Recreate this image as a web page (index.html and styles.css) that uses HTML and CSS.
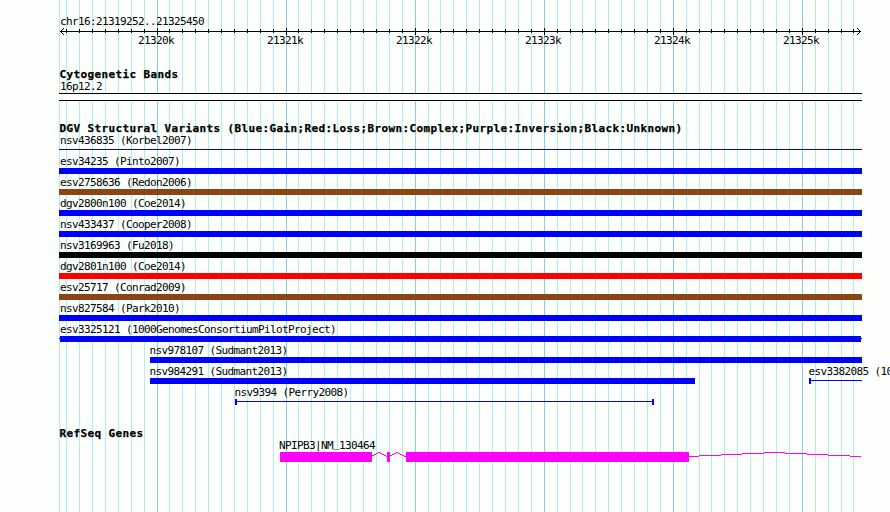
FILE: index.html
```html
<!DOCTYPE html>
<html lang="en">
<head>
<meta charset="utf-8">
<title>chr16:21319252..21325450</title>
<link rel="stylesheet" href="styles.css">
</head>
<body>
<main class="browser">
<svg class="grid" width="890" height="512" aria-hidden="true">
<path class="minor" d="M59.5 0v512M66.5 0v512M79.5 0v512M92.5 0v512M105.5 0v512M118.5 0v512M131.5 0v512M144.5 0v512M169.5 0v512M182.5 0v512M195.5 0v512M208.5 0v512M221.5 0v512M234.5 0v512M247.5 0v512M260.5 0v512M273.5 0v512M298.5 0v512M311.5 0v512M324.5 0v512M337.5 0v512M350.5 0v512M363.5 0v512M376.5 0v512M389.5 0v512M402.5 0v512M428.5 0v512M440.5 0v512M453.5 0v512M466.5 0v512M479.5 0v512M492.5 0v512M505.5 0v512M518.5 0v512M531.5 0v512M557.5 0v512M570.5 0v512M582.5 0v512M595.5 0v512M608.5 0v512M621.5 0v512M634.5 0v512M647.5 0v512M660.5 0v512M686.5 0v512M699.5 0v512M711.5 0v512M724.5 0v512M737.5 0v512M750.5 0v512M763.5 0v512M776.5 0v512M789.5 0v512M815.5 0v512M828.5 0v512M841.5 0v512M853.5 0v512"/>
<path class="major" d="M157.5 0v512M286.5 0v512M415.5 0v512M544.5 0v512M673.5 0v512M802.5 0v512"/>
</svg>
<header class="ruler">
<div class="label">chr16:21319252..21325450</div>
<svg class="axis" width="803" height="7" viewBox="59 28 803 7">
<path d="M60 31.5H861M79.5 29v4M92.5 29v4M105.5 29v4M118.5 29v4M131.5 29v4M144.5 29v4M157.5 28v7M169.5 29v4M182.5 29v4M195.5 29v4M208.5 29v4M221.5 29v4M234.5 29v4M247.5 29v4M260.5 29v4M273.5 29v4M286.5 28v7M298.5 29v4M311.5 29v4M324.5 29v4M337.5 29v4M350.5 29v4M363.5 29v4M376.5 29v4M389.5 29v4M402.5 29v4M415.5 28v7M428.5 29v4M440.5 29v4M453.5 29v4M466.5 29v4M479.5 29v4M492.5 29v4M505.5 29v4M518.5 29v4M531.5 29v4M544.5 28v7M557.5 29v4M570.5 29v4M582.5 29v4M595.5 29v4M608.5 29v4M621.5 29v4M634.5 29v4M647.5 29v4M660.5 29v4M673.5 28v7M686.5 29v4M699.5 29v4M711.5 29v4M724.5 29v4M737.5 29v4M750.5 29v4M763.5 29v4M776.5 29v4M789.5 29v4M802.5 28v7M815.5 29v4M828.5 29v4M841.5 29v4M853.5 29v4M66.5 29v4M63.5 28v1M62.5 29v1M61.5 30v1M61.5 32v1M62.5 33v1M63.5 34v1M857.5 28v1M858.5 29v1M859.5 30v1M859.5 32v1M858.5 33v1M857.5 34v1"/>
</svg>
<div class="ticks"><span>21320k</span><span>21321k</span><span>21322k</span><span>21323k</span><span>21324k</span><span>21325k</span></div>
</header>
<section class="bands">
<h2>Cytogenetic Bands</h2>
<div class="label">16p12.2</div>
<div class="band"></div>
</section>
<section class="variants">
<h2>DGV Structural Variants (Blue:Gain;Red:Loss;Brown:Complex;Purple:Inversion;Black:Unknown)</h2>
<div class="row"><div class="label">nsv436835 (Korbel2007)</div><div class="thin"></div></div>
<div class="row"><div class="label">esv34235 (Pinto2007)</div><div class="bar gain"></div></div>
<div class="row"><div class="label">esv2758636 (Redon2006)</div><div class="bar complex"></div></div>
<div class="row"><div class="label">dgv2800n100 (Coe2014)</div><div class="bar gain"></div></div>
<div class="row"><div class="label">nsv433437 (Cooper2008)</div><div class="bar gain"></div></div>
<div class="row"><div class="label">nsv3169963 (Fu2018)</div><div class="bar unknown"></div></div>
<div class="row"><div class="label">dgv2801n100 (Coe2014)</div><div class="bar loss"></div></div>
<div class="row"><div class="label">esv25717 (Conrad2009)</div><div class="bar complex"></div></div>
<div class="row"><div class="label">nsv827584 (Park2010)</div><div class="bar gain"></div></div>
<div class="row"><div class="label">esv3325121 (1000GenomesConsortiumPilotProject)</div>
<svg class="span" width="803" height="6"><path fill="#00f" d="M0 2h803v1H0zM1 0h801v6H1z"/></svg></div>
<div class="row start-150"><div class="label">nsv978107 (Sudmant2013)</div><div class="bar gain"></div></div>
<div class="row split">
<div class="sudmant"><div class="label">nsv984291 (Sudmant2013)</div><div class="bar gain"></div></div>
<div class="pilot"><div class="label">esv3382085 (10</div><div class="thin capped"></div></div>
</div>
<div class="row perry"><div class="label">nsv9394 (Perry2008)</div><div class="thin capped closed"></div></div>
</section>
<section class="genes">
<h2>RefSeq Genes</h2>
<div class="label gene-name">NPIPB3|NM<span class="raised">_</span>130464</div>
<svg class="gene" width="803" height="10" viewBox="59 452 803 10">
<path fill="#f0f" d="M280 452h92v10h-92zM387 452h3v10h-3zM406 452h283v10H406zM372 455h2v1h-2zM374 454h2v1h-2zM376 453h2v1h-2zM378 452h2v1h-2zM380 453h2v1h-2zM382 454h2v1h-2zM384 455h2v1h-2zM386 456h1v1h-1zM390 455h2v1h-2zM392 454h2v1h-2zM394 453h2v1h-2zM396 452h2v1h-2zM398 453h2v1h-2zM400 454h2v1h-2zM402 455h2v1h-2zM404 456h2v1h-2zM689 456h10v1h-10zM699 455h22v1h-22zM721 454h21v1h-21zM742 453h22v1h-22zM764 452h21v1h-21zM785 453h22v1h-22zM807 454h21v1h-21zM828 455h22v1h-22zM850 456h11v1h-11z"/>
</svg>
</section>
</main>
</body>
</html>
```
FILE: styles.css
```css
* { box-sizing: border-box; }
body { margin: 0; background: #fdfffc; color: #000; }
.browser {
  position: relative;
  width: 890px;
  height: 512px;
  padding: 15px 0 0 59px;
  overflow: hidden;
  font-family: "DejaVu Sans Mono", monospace;
  font-size: 11px;
  letter-spacing: -0.622px;
}
svg { display: block; shape-rendering: crispEdges; }
.grid { position: absolute; left: 0; top: 0; z-index: -1; }
.grid path, .axis path { fill: none; stroke-width: 1; }
.grid .minor { stroke: #afeeee; }
.grid .major { stroke: #87ceeb; }
.axis path { stroke: #000; }
.label { height: 13px; padding-left: 1px; line-height: 13px; white-space: nowrap; }
h2 {
  height: 13px;
  margin: 0;
  padding-left: 0.5px;
  font-size: 11px;
  line-height: 13px;
  letter-spacing: 0.378px;
  white-space: nowrap;
  -webkit-text-stroke: 0.25px #000;
}
.ruler { height: 52px; }
.ruler .label { height: 13px; }
.ticks {
  display: grid;
  grid-template-columns: repeat(6, 129px);
  margin-left: 79px;
  line-height: 11px;
}
.bands { height: 55px; padding-top: 1px; }
.bands .label { height: 12px; line-height: 11px; }
.band { width: 803px; height: 8px; border: solid #000; border-width: 1px 0; background: #fdfffc; }
.variants { height: 305px; }
.row { width: 803px; height: 21px; }
.row .label { height: 14px; line-height: 15px; }
.variants > h2 { height: 11px; }
.bar { height: 6px; }
.gain { background: #00f; }
.loss { background: #f00; }
.complex { background: #8b4513; }
.unknown { background: #000; }
.thin { height: 6px; background: linear-gradient(#00f, #00f) 0 2px / 100% 1px no-repeat; }
.capped { border-left: 2px solid #00f; }
.closed { border-right: 2px solid #00f; }
.start-150 { padding-left: 91px; }
.start-150 .label, .sudmant .label, .perry .label, .pilot .label { padding-left: 0; text-indent: -0.5px; }
.split { display: flex; justify-content: space-between; padding-left: 91px; }
.sudmant { width: 545px; }
.pilot { width: 53px; }
.perry { width: 595px; padding-left: 176px; }
.genes .gene-name { height: 12px; padding-left: 220px; line-height: 11px; }
.raised { line-height: 0; vertical-align: 2px; }
```
